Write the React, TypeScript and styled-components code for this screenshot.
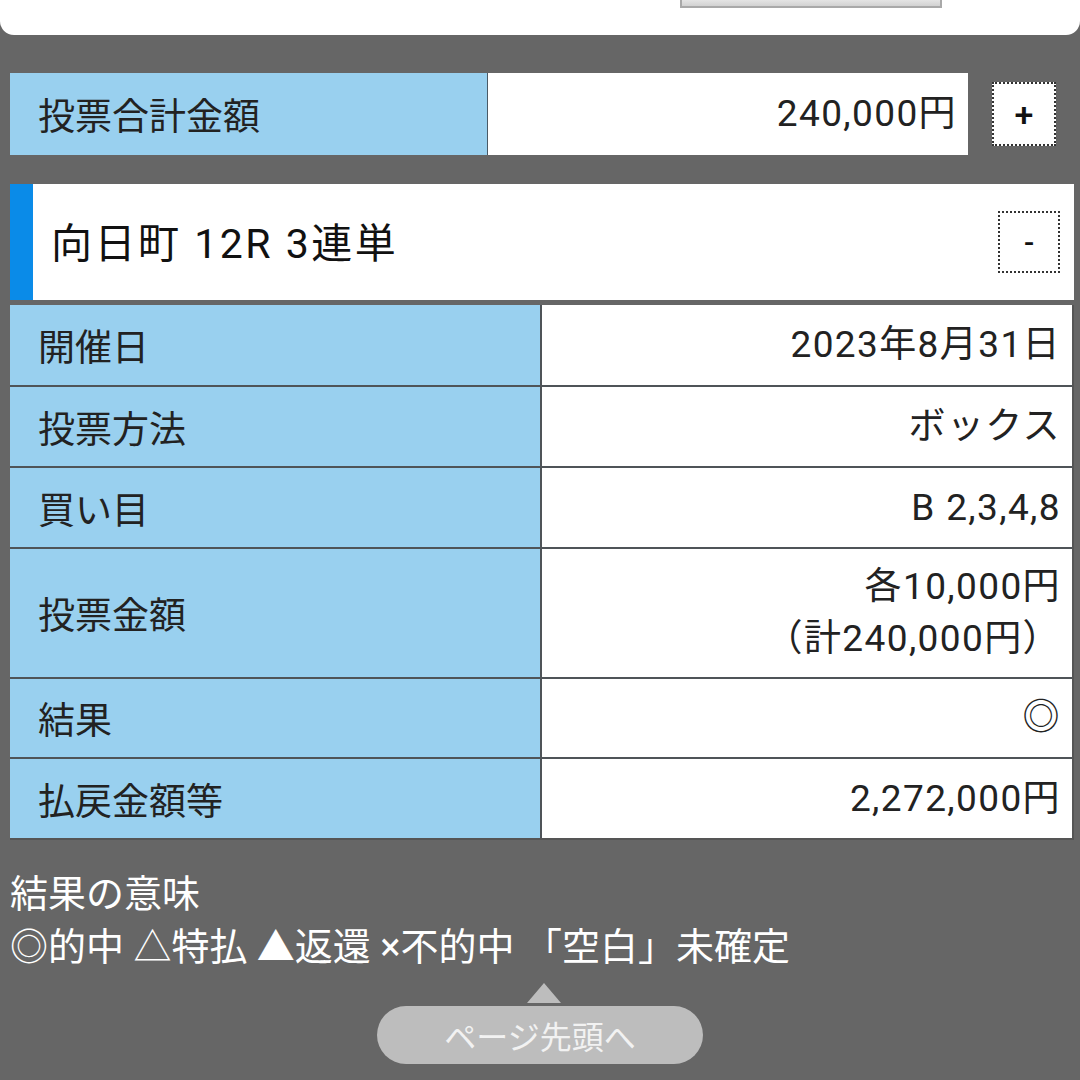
import React from 'react'
import styled, { createGlobalStyle } from 'styled-components'

const GlobalStyle = createGlobalStyle`
  html, body {
    margin: 0;
    padding: 0;
    background: #666666;
  }
  body {
    font-family: Roboto, "Noto Sans CJK JP", sans-serif;
    width: 1080px;
    height: 1080px;
    overflow: hidden;
  }
`

const Page = styled.div`
  width: 1080px;
  height: 1080px;
  background: #666666;
  display: flex;
  flex-direction: column;
`

const TopCard = styled.div`
  height: 35px;
  background: #ffffff;
  border-radius: 0 0 14px 14px;
  display: flex;
  padding-left: 680px;
`

const TopButton = styled.div`
  width: 258px;
  height: 6px;
  background: linear-gradient(#e4e4e4, #d2d2d2);
  border: 2px solid #a9a9a9;
  border-top: none;
`

const Content = styled.div`
  padding: 0 6px 0 10px;
  display: flex;
  flex-direction: column;
`

const TotalRow = styled.div`
  margin-top: 38px;
  display: flex;
  align-items: center;
`

const TotalBox = styled.div`
  width: 958px;
  height: 82px;
  display: grid;
  grid-template-columns: 478px 1fr;
`

const LabelCell = styled.div`
  background: #99d0ef;
  color: #222;
  font-size: 37px;
  display: flex;
  align-items: center;
  padding-left: 28px;
`

const TotalLabel = styled(LabelCell)`
  border-right: 1px solid #4a5a66;
`

const ValueCell = styled.div<{ $pad?: number }>`
  background: #ffffff;
  color: #222;
  font-size: 37px;
  letter-spacing: 1.4px;
  display: flex;
  flex-direction: column;
  justify-content: center;
  align-items: flex-end;
  text-align: right;
  padding-right: ${p => p.$pad ?? 11}px;
  line-height: 1.4;
`

const ToggleButton = styled.div<{ $size: number }>`
  box-sizing: border-box;
  width: ${p => p.$size}px;
  height: ${p => p.$size}px;
  background: #ffffff;
  border: 2px dotted #333;
  display: flex;
  align-items: center;
  justify-content: center;
  font-size: 30px;
  color: #111;
  font-weight: 500;
  flex-shrink: 0;
`

const PlusButton = styled(ToggleButton)`
  margin-left: 24px;
  font-size: 34px;
`

const HeaderCard = styled.div`
  margin-top: 29px;
  height: 116px;
  background: #ffffff;
  border-left: 23px solid #0a8be8;
  display: flex;
  align-items: center;
  justify-content: space-between;
  padding: 0 14px 0 18px;
`

const Title = styled.div`
  font-size: 41px;
  letter-spacing: 2.5px;
  color: #111;
  margin-top: -4px;
`

const Table = styled.div`
  margin-top: 5px;
  width: 1062px;
  display: grid;
  grid-template-columns: 530px 1fr;
  gap: 2px;
  background: #4f5458;
  border-right: 2px solid #555;
  border-bottom: 2px solid #555;
`

const Legend = styled.div`
  margin-top: 28px;
  color: #ffffff;
  font-size: 38px;
  line-height: 53px;
`

const TopLink = styled.div`
  margin-top: 9px;
  display: flex;
  flex-direction: column;
  align-items: center;
`

const Arrow = styled.div`
  width: 0;
  height: 0;
  border-left: 17px solid transparent;
  border-right: 17px solid transparent;
  border-bottom: 20px solid #bdbdbd;
  margin-left: 8px;
  margin-bottom: 3px;
`

const TopLinkButton = styled.div`
  width: 326px;
  height: 58px;
  border-radius: 29px;
  background: #bdbdbd;
  color: #f2f2f2;
  font-size: 32px;
  display: flex;
  align-items: center;
  justify-content: center;
`

const rows: { label: string; value: React.ReactNode; h: number }[] = [
  { label: '開催日', value: '2023年8月31日', h: 80 },
  { label: '投票方法', value: 'ボックス', h: 79 },
  { label: '買い目', value: 'B 2,3,4,8', h: 79 },
  {
    label: '投票金額',
    value: (
      <>
        <span>各10,000円</span>
        <span>（計240,000円）</span>
      </>
    ),
    h: 128,
  },
  { label: '結果', value: '◎', h: 78 },
  { label: '払戻金額等', value: '2,272,000円', h: 79 },
]

export default function App() {
  return (
    <Page>
      <GlobalStyle />
      <TopCard>
        <TopButton />
      </TopCard>
      <Content>
        <TotalRow>
          <TotalBox>
            <TotalLabel>投票合計金額</TotalLabel>
            <ValueCell $pad={11}>240,000円</ValueCell>
          </TotalBox>
          <PlusButton $size={64}>+</PlusButton>
        </TotalRow>
        <HeaderCard>
          <Title>向日町 12R 3連単</Title>
          <ToggleButton $size={62}>-</ToggleButton>
        </HeaderCard>
        <Table>
          {rows.map(r => (
            <React.Fragment key={r.label}>
              <LabelCell style={{ height: r.h }}>{r.label}</LabelCell>
              <ValueCell>{r.value}</ValueCell>
            </React.Fragment>
          ))}
        </Table>
        <Legend>
          <div>結果の意味</div>
          <div>◎的中 △特払 ▲返還 ×不的中 「空白」未確定</div>
        </Legend>
      </Content>
      <TopLink>
        <Arrow />
        <TopLinkButton>ページ先頭へ</TopLinkButton>
      </TopLink>
    </Page>
  )
}
